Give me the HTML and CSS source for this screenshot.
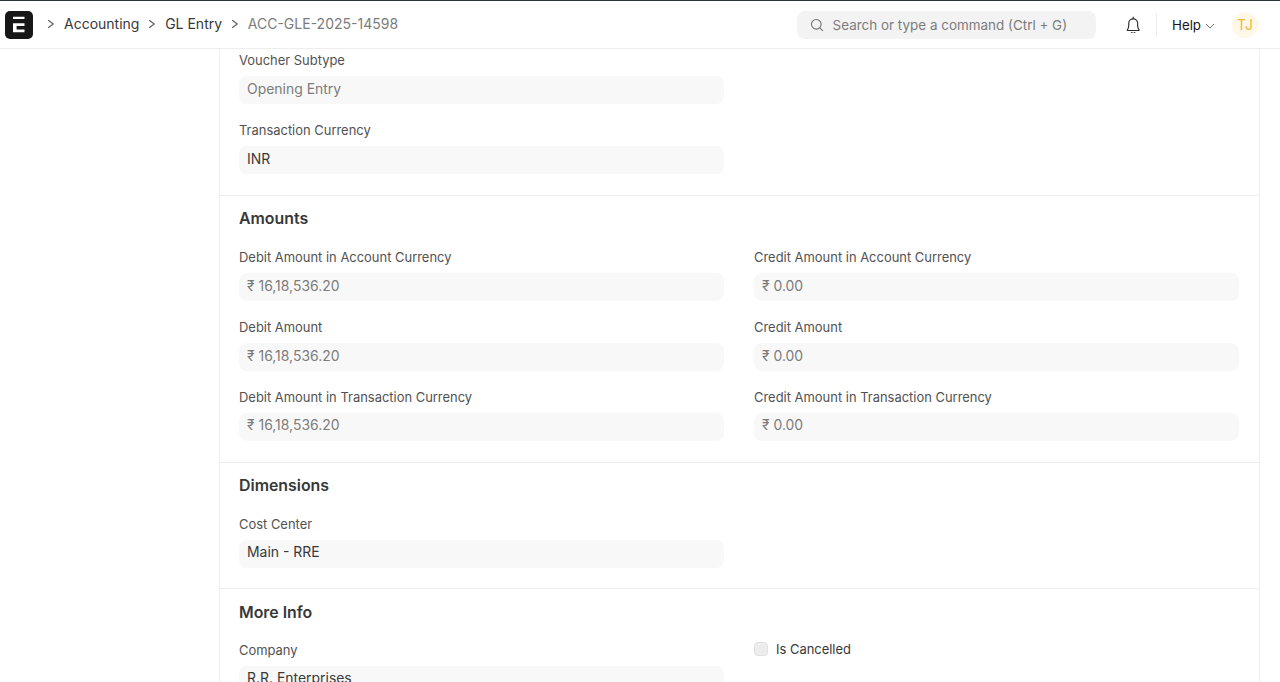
FILE: index.html
```html
<!DOCTYPE html>
<html lang="en">
<head>
<meta charset="utf-8">
<title>ACC-GLE-2025-14598</title>
<link rel="stylesheet" href="styles.css">
</head>
<body>
<header class="navbar">
  <div class="logo">
    <svg width="16" height="18" viewBox="0 0 16 18" aria-hidden="true"><path class="logo-mark" d="M2 .8h11.500V3H2zM2 7.300h11.500v2.600H5.600v3.500h7.900v2.900H2z"/></svg>
  </div>
  <nav class="crumbs">
    <svg class="chev" width="8" height="10" viewBox="0 0 8 10"><path d="M1.200 1.200 6.300 5 1.200 8.800"/></svg>
    <span class="crumb">Accounting</span>
    <svg class="chev" width="8" height="10" viewBox="0 0 8 10"><path d="M1.200 1.200 6.300 5 1.200 8.800"/></svg>
    <span class="crumb">GL Entry</span>
    <svg class="chev" width="8" height="10" viewBox="0 0 8 10"><path d="M1.200 1.200 6.300 5 1.200 8.800"/></svg>
    <span class="crumb current">ACC-GLE-2025-14598</span>
  </nav>
  <div class="search">
    <svg class="search-icon" width="14" height="14" viewBox="0 0 14 14"><circle cx="6.300" cy="6.300" r="4.800"/><path d="m9.800 9.800 3 3"/></svg>
    <span>Search or type a command (Ctrl + G)</span>
  </div>
  <svg class="bell" width="14.400" height="17.400" viewBox="3 1.500 12 14.500"><path d="M4.200 12.800c.8-1 1.100-1.900 1.100-3.400V7.600a3.700 3.700 0 0 1 7.400 0v1.800c0 1.500.3 2.400 1.100 3.400.3.4.1.8-.4.8H4.600c-.5 0-.7-.4-.4-.8Z"/><path d="M7.300 15.200c.9.8 2.500.8 3.400 0"/><path d="M9 2.200v1.700"/></svg>
  <div class="nav-divider"></div>
  <div class="help">Help
    <svg width="10" height="6" viewBox="0 0 10 6"><path d="M1 1l4 4 4-4"/></svg>
  </div>
  <div class="avatar">TJ</div>
</header>
<main class="page">
  <div class="card">
    <section class="section section-first">
      <div class="grid">
        <div class="col">
          <div class="field"><div class="label">Voucher Subtype</div><div class="input muted">Opening Entry</div></div>
          <div class="field"><div class="label">Transaction Currency</div><div class="input">INR</div></div>
        </div>
      </div>
    </section>
    <section class="section">
      <h2 class="title">Amounts</h2>
      <div class="grid">
        <div class="col">
          <div class="field"><div class="label">Debit Amount in Account Currency</div><div class="input muted">₹ 16,18,536.20</div></div>
          <div class="field"><div class="label">Debit Amount</div><div class="input muted">₹ 16,18,536.20</div></div>
          <div class="field"><div class="label">Debit Amount in Transaction Currency</div><div class="input muted tight">₹ 16,18,536.20</div></div>
        </div>
        <div class="col">
          <div class="field"><div class="label">Credit Amount in Account Currency</div><div class="input muted">₹ 0.00</div></div>
          <div class="field"><div class="label">Credit Amount</div><div class="input muted">₹ 0.00</div></div>
          <div class="field"><div class="label">Credit Amount in Transaction Currency</div><div class="input muted tight">₹ 0.00</div></div>
        </div>
      </div>
    </section>
    <section class="section section-dim">
      <h2 class="title">Dimensions</h2>
      <div class="grid">
        <div class="col">
          <div class="field"><div class="label">Cost Center</div><div class="input tight">Main - RRE</div></div>
        </div>
      </div>
    </section>
    <section class="section section-last">
      <h2 class="title">More Info</h2>
      <div class="grid">
        <div class="col">
          <div class="field"><div class="label">Company</div><div class="input tight">R.R. Enterprises</div></div>
        </div>
        <div class="col">
          <label class="check"><span class="box"></span>Is Cancelled</label>
        </div>
      </div>
    </section>
  </div>
</main>
</body>
</html>
```
FILE: styles.css
```css
* { box-sizing: border-box; }
html, body { margin: 0; height: 100%; overflow: hidden; background: #fff; }
body { font-family: Inter, "Liberation Sans", sans-serif; color: #383838; font-size: 14px; }

.navbar {
  display: flex;
  align-items: center;
  height: 49px;
  border-top: 1px solid #2f3438;
  border-bottom: 1px solid #ededed;
  padding: 0 22px 0 5px;
}
.logo {
  width: 28px; height: 28px; border-radius: 5px; background: #171717;
  display: flex; align-items: center; justify-content: center;
}
.logo svg { display: block; }
.logo-mark { fill: #fff; }
.crumbs { display: flex; align-items: center; margin: 0 0 2px 14px; gap: 9px; flex: 1; font-size: 14px; }
.chev { fill: none; stroke: #5a5a5a; stroke-width: 1.1; }
.crumb { color: #383838; margin-right: -0.3px; }
.current { color: #7c7c7c; }
.search {
  width: 299px; height: 28px; border-radius: 8px; background: #f3f3f3;
  display: flex; align-items: center; gap: 9px; padding-left: 13px;
  color: #7c7c7c; font-size: 13.44px;
}
.search-icon { fill: none; stroke: #6f6f6f; stroke-width: 1.1; }
.bell { margin-left: 30px; fill: none; stroke: #2a2a2a; stroke-width: 0.95; }
.nav-divider { width: 1px; height: 24px; background: #ededed; margin-left: 16px; }
.help { display: flex; align-items: center; gap: 4px; margin-left: 15px; color: #171717; font-size: 13.3px; }
.help svg { fill: none; stroke: #6f6f6f; stroke-width: 1; margin-top: 2px; }
.avatar {
  width: 26px; height: 26px; border-radius: 50%; background: #fff8e6; color: #ebb93f;
  font-size: 14px; display: flex; align-items: center; justify-content: center; margin-left: 17px;
}

.page { padding-left: 219px; padding-right: 20px; }
.card { border-left: 1px solid #efefef; border-right: 1px solid #efefef; }
.section { padding: 12.5px 20px 3.9px 19px; border-bottom: 1px solid #ededed; }
.section-first { padding-top: 2px; }
.section-dim { padding-bottom: 3.2px; }
.title { margin: 0 0 18px; font-size: 15.9px; line-height: 22px; font-weight: 600; color: #383838; }
.section-last .title { margin-bottom: 17.4px; }
.grid { display: grid; grid-template-columns: 1fr 1fr; column-gap: 30px; }
.field { margin-bottom: 16.85px; }
.label { font-size: 12.95px; line-height: 18px; margin-bottom: 7px; color: #525252; }
.input {
  height: 28px; border-radius: 8px; background: #f8f8f8; padding: 0 8px;
  font-size: 13.95px; line-height: 26.5px; color: #383838;
}
.tight { line-height: 24px; }
.muted { color: #7c7c7c; }
.check { display: flex; align-items: center; gap: 8px; font-size: 12.95px; line-height: 18px; color: #383838; margin-top: -1.4px; }
.box { width: 14px; height: 14px; border-radius: 4px; background: #ededed; border: 1px solid #e2e2e2; }
```
